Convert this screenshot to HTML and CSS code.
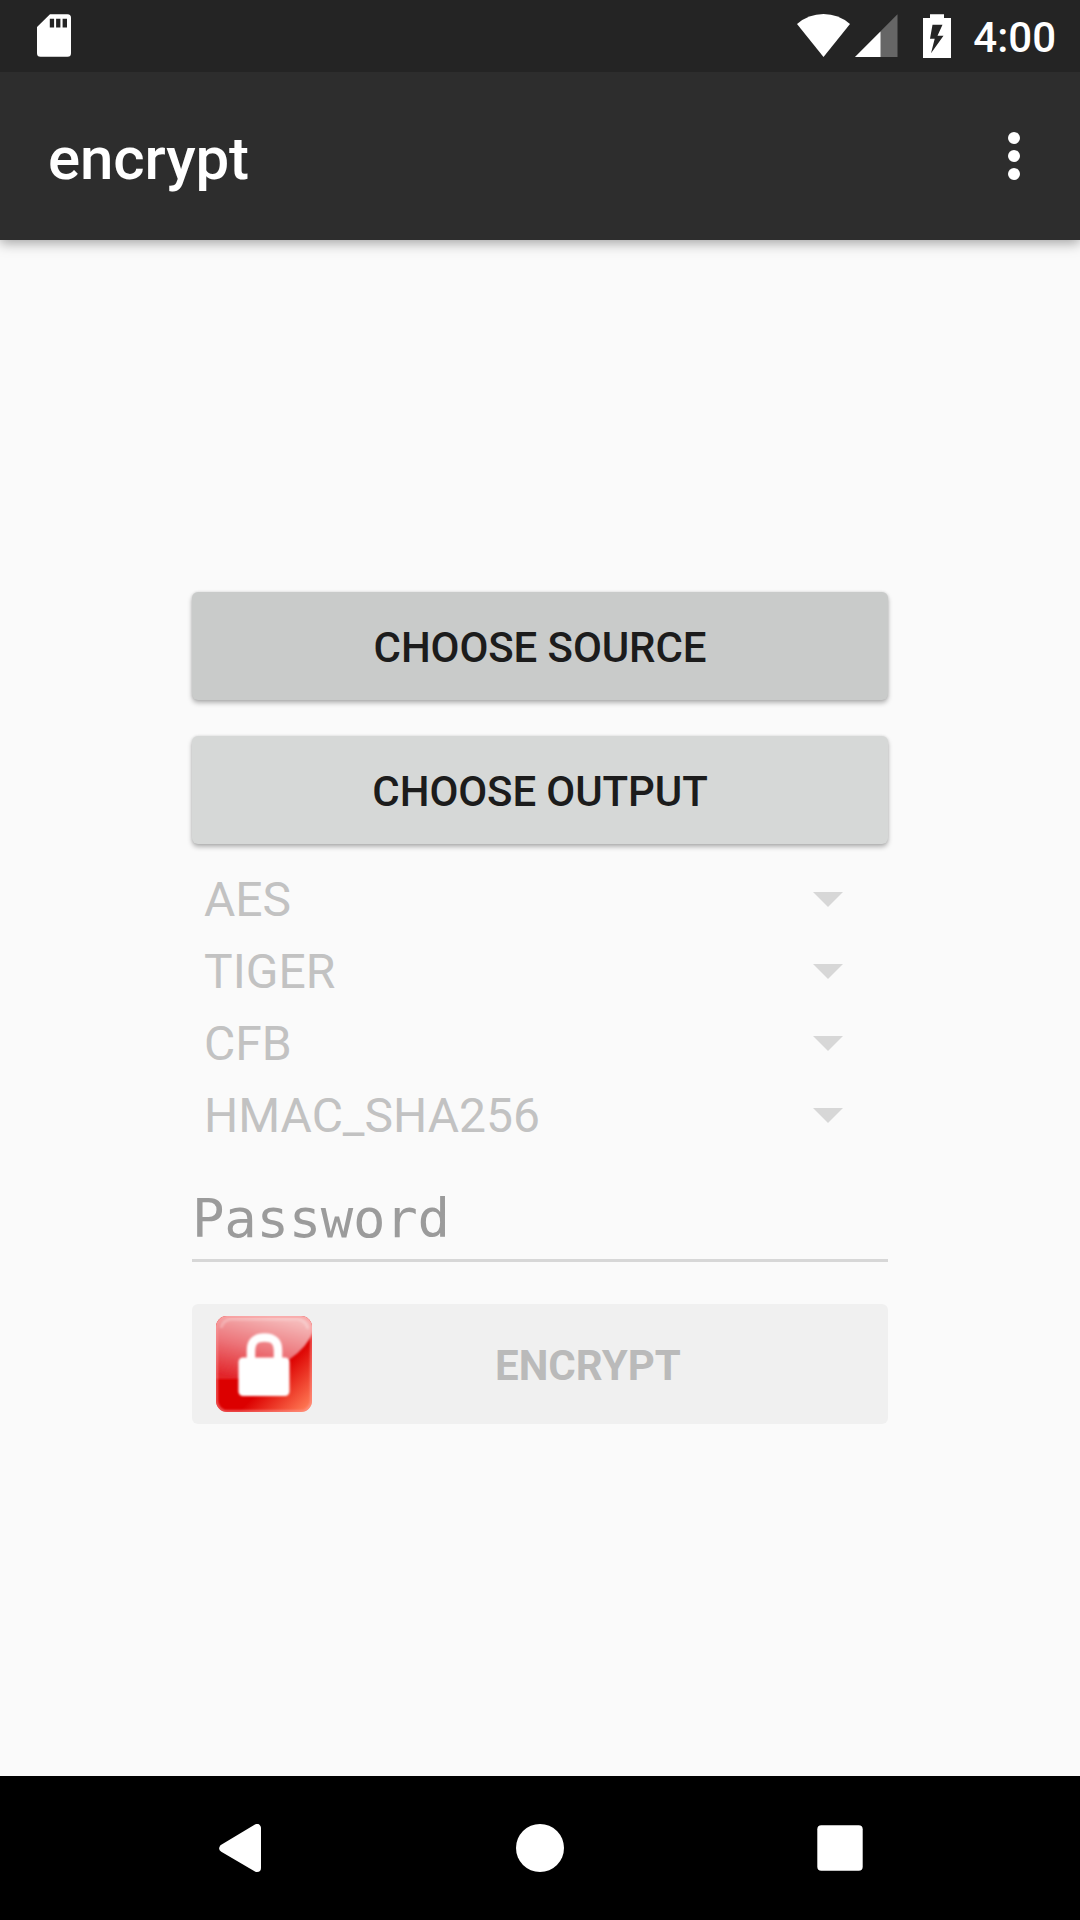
FILE: index.html
```html
<!DOCTYPE html>
<html lang="en">
<head>
<meta charset="utf-8">
<title>encrypt</title>
<link rel="stylesheet" href="styles.css">
</head>
<body>
<div class="screen">
  <header class="status-bar">
    <svg class="sd-icon" width="34" height="43" viewBox="0 0 34 43"><path fill="#fff" fill-rule="evenodd" d="M13 .3H30.500a3.500 3.500 0 0 1 3.500 3.500V39.300a3.500 3.500 0 0 1-3.500 3.500H3.500A3.500 3.500 0 0 1 0 39.300V13ZM12.800 4.700v8.800h4.300V4.700Zm6.300 0v8.800h4.300V4.700Zm6.500 0v8.800h4.400V4.700Z"/></svg>
    <div class="status-right">
      <svg class="wifi-icon" width="53" height="43" viewBox="0 0 53 43"><path fill="#fff" d="M0 10Q11.500 0 26.500 0T53 10L26.500 43Z"/></svg>
      <svg class="signal-icon" width="43" height="43" viewBox="0 0 43 43"><path fill="#666" d="M0 43 42.500 .3V43Z"/><path fill="#fff" d="M0 43 25.500 17.400V43Z"/></svg>
      <svg class="battery-icon" width="28" height="44" viewBox="0 0 28 44"><path fill="#fff" fill-rule="evenodd" d="M7 .3H21V4H28V44H0V4H7ZM9.500 10.700 7 24.700H11.700L8 39.300 20.500 21.700H14.500L19.500 10.700Z"/></svg>
      <span class="clock">4:00</span>
    </div>
  </header>

  <div class="app-bar">
    <h1 class="title">encrypt</h1>
    <svg class="more-icon" width="12" height="48" viewBox="0 0 12 48" fill="#fff"><circle cx="6" cy="6" r="6"/><circle cx="6" cy="24" r="6"/><circle cx="6" cy="42" r="6"/></svg>
  </div>

  <main class="content">
    <button class="btn btn-source">CHOOSE SOURCE</button>
    <button class="btn btn-output">CHOOSE OUTPUT</button>
    <div class="spinners">
      <div class="spinner"><span>AES</span><svg width="30" height="15" viewBox="0 0 30 15"><path d="M0 0H30L15 15Z"/></svg></div>
      <div class="spinner"><span>TIGER</span><svg width="30" height="15" viewBox="0 0 30 15"><path d="M0 0H30L15 15Z"/></svg></div>
      <div class="spinner"><span>CFB</span><svg width="30" height="15" viewBox="0 0 30 15"><path d="M0 0H30L15 15Z"/></svg></div>
      <div class="spinner"><span>HMAC_SHA256</span><svg width="30" height="15" viewBox="0 0 30 15"><path d="M0 0H30L15 15Z"/></svg></div>
    </div>
    <div class="password">Password</div>
    <button class="encrypt" disabled>
      <svg class="lock-icon" width="96" height="96" viewBox="0 0 96 96">
        <defs>
          <linearGradient id="base" gradientUnits="userSpaceOnUse" x1="48" y1="48" x2="92" y2="92"><stop offset=".25" stop-color="#dc0000"/><stop offset="1" stop-color="#ff7a55"/></linearGradient>
          <linearGradient id="gloss" gradientUnits="userSpaceOnUse" x1="52" y1="0" x2="36" y2="66"><stop offset="0" stop-color="#f5b8b8"/><stop offset=".5" stop-color="#ec7479"/><stop offset="1" stop-color="#e2262b"/></linearGradient>
          <filter id="soft" x="-10%" y="-10%" width="120%" height="120%"><feGaussianBlur stdDeviation="1"/></filter>
          <clipPath id="tile"><rect width="96" height="96" rx="11"/></clipPath>
        </defs>
        <g clip-path="url(#tile)">
          <rect width="96" height="96" fill="url(#base)"/>
          <path filter="url(#soft)" fill="url(#gloss)" d="M-4-4H100V10Q92 31 74 43Q52 63 20 63H-4Z"/>
          <rect filter="url(#soft)" x=".5" y=".5" width="95" height="95" rx="11" fill="none" stroke="#ff9c9c" stroke-opacity=".6" stroke-width="2.500"/>
          <path filter="url(#soft)" d="M5 12Q7 4 15 3H81Q90 4 92 13" fill="none" stroke="#fff" stroke-opacity=".25" stroke-width="3"/>
        </g>
        <g filter="url(#soft)">
          <path d="M35 44V34Q35 21.500 48.500 21.500T62 34V44" fill="none" stroke="#fff" stroke-width="8.500"/>
          <rect x="22.500" y="41.500" width="51" height="38.500" rx="4.500" fill="#fff"/>
        </g>
      </svg>
      <span class="encrypt-label">ENCRYPT</span>
    </button>
  </main>

  <nav class="nav-bar">
    <svg width="48" height="48" viewBox="0 0 48 48"><path fill="#fff" stroke="#fff" stroke-width="8" stroke-linejoin="round" d="M7.300 24.200 41 4V44Z"/></svg>
    <svg width="48" height="48" viewBox="0 0 48 48"><circle cx="24" cy="24" r="24" fill="#fff"/></svg>
    <svg width="48" height="48" viewBox="0 0 48 48"><rect x="1.300" y="1.300" width="45.400" height="45.400" rx="4" fill="#fff"/></svg>
  </nav>
</div>
</body>
</html>
```
FILE: styles.css
```css
* { box-sizing: border-box; }

body {
  margin: 0;
  font-family: Roboto, sans-serif;
}

.screen {
  display: flex;
  flex-direction: column;
  width: 1080px;
  height: 1920px;
  background: #fafafa;
  overflow: hidden;
}

.status-bar {
  position: relative;
  z-index: 1;
  display: flex;
  justify-content: space-between;
  align-items: flex-start;
  height: 72px;
  padding: 14px 24px 0 37px;
  background: #242424;
}

.status-right { display: flex; }
.signal-icon { margin-left: 5px; }
.battery-icon { margin-left: 25px; }

.clock {
  margin-left: 22px;
  font-size: 42px;
  font-weight: 500;
  line-height: 48px;
  color: #fff;
}

.app-bar {
  display: flex;
  justify-content: space-between;
  align-items: center;
  height: 168px;
  padding: 0 60px 0 48px;
  background: #2d2d2d;
  box-shadow: 0 3px 12px rgba(0, 0, 0, .36);
}

.title {
  margin: 0;
  padding-top: 5px;
  font-size: 60px;
  font-weight: 500;
  line-height: 70px;
  letter-spacing: -.1px;
  color: #fff;
}

.more-icon { display: block; }

.content {
  display: flex;
  flex: 1;
  flex-direction: column;
  width: 696px;
  margin: 0 auto;
  padding-top: 352px;
}

.btn {
  height: 108px;
  margin: 0 0 36px;
  padding: 4px 0 0;
  border: 0;
  border-radius: 6px;
  font: 500 42px/50px Roboto, sans-serif;
  letter-spacing: -.1px;
  color: #1c1c1c;
  box-shadow: 0 3px 5px rgba(0, 0, 0, .28), 0 0 3px rgba(0, 0, 0, .12);
}

.btn-source { background: #c9cbca; }
.btn-output { margin-bottom: 19px; background: #d6d8d7; }

.spinner {
  display: flex;
  justify-content: space-between;
  align-items: center;
  height: 72px;
  padding: 0 45px 0 12px;
  font-size: 48px;
  color: #c2c2c2;
}

.spinner svg { fill: #d7d7d7; }

.password {
  height: 111px;
  padding-top: 36px;
  border-bottom: 3px solid #d7d7d7;
  font: 54px/64px "DejaVu Sans Mono", monospace;
  letter-spacing: -.3px;
  color: #9b9b9b;
}

.encrypt {
  display: flex;
  align-items: center;
  height: 120px;
  margin-top: 42px;
  padding: 0 24px;
  border: 0;
  border-radius: 6px;
  background: #f0f0f0;
  font: 700 42px/50px Roboto, sans-serif;
  color: #bababa;
}

.encrypt-label {
  flex: 1;
  padding-top: 4px;
  text-align: center;
}

.nav-bar {
  display: flex;
  justify-content: space-between;
  align-items: center;
  height: 144px;
  padding: 0 216px;
  background: #000;
}
```
